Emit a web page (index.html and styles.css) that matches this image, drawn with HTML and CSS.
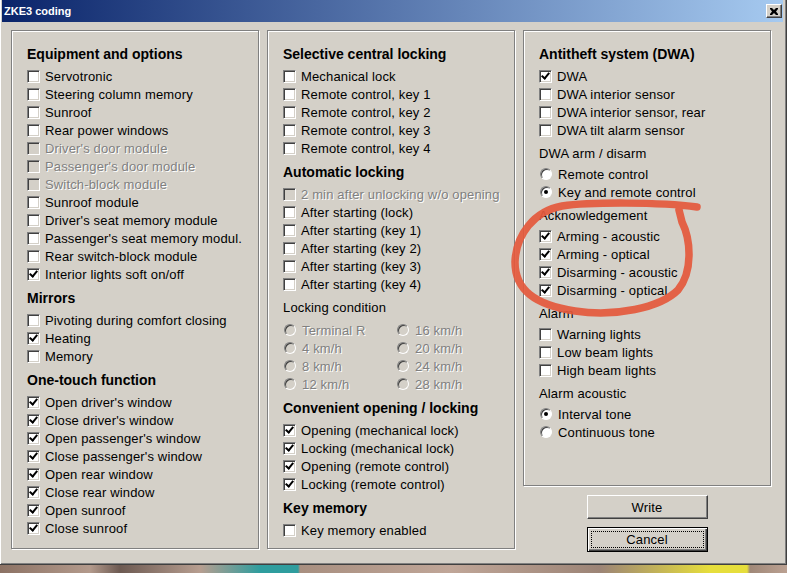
FILE: index.html
```html
<!DOCTYPE html>
<html lang="en">
<head>
  <meta charset="UTF-8" />
  <title>ZKE3 coding</title>
  <link rel="stylesheet" href="styles.css">
</head>
<body>
  <div class="window">
    <div class="titlebar">
      <span class="title">ZKE3 coding</span>
      <span class="close">
        <svg width="8" height="7" viewBox="0 0 8 7"><path d="M0 0h2l2 2 2-2h2v1l-2 2.5 2 2.5v1h-2l-2-2-2 2h-2v-1l2-2.5-2-2.5z" fill="#000"/></svg>
      </span>
    </div>

    <div class="client">
      <!-- Column 1 -->
      <div class="panel tall">
        <div class="heading">Equipment and options</div>
        <div class="row"><span class="cb"></span>Servotronic</div>
        <div class="row"><span class="cb"></span>Steering column memory</div>
        <div class="row"><span class="cb"></span>Sunroof</div>
        <div class="row"><span class="cb"></span>Rear power windows</div>
        <div class="row dis"><span class="cb"></span>Driver's door module</div>
        <div class="row dis"><span class="cb"></span>Passenger's door module</div>
        <div class="row dis"><span class="cb"></span>Switch-block module</div>
        <div class="row"><span class="cb"></span>Sunroof module</div>
        <div class="row"><span class="cb"></span>Driver's seat memory module</div>
        <div class="row"><span class="cb"></span>Passenger's seat memory modul.</div>
        <div class="row"><span class="cb"></span>Rear switch-block module</div>
        <div class="row"><span class="cb on"></span>Interior lights soft on/off</div>

        <div class="heading">Mirrors</div>
        <div class="row"><span class="cb"></span>Pivoting during comfort closing</div>
        <div class="row"><span class="cb on"></span>Heating</div>
        <div class="row"><span class="cb"></span>Memory</div>

        <div class="heading">One-touch function</div>
        <div class="row"><span class="cb on"></span>Open driver's window</div>
        <div class="row"><span class="cb on"></span>Close driver's window</div>
        <div class="row"><span class="cb on"></span>Open passenger's window</div>
        <div class="row"><span class="cb on"></span>Close passenger's window</div>
        <div class="row"><span class="cb on"></span>Open rear window</div>
        <div class="row"><span class="cb on"></span>Close rear window</div>
        <div class="row"><span class="cb on"></span>Open sunroof</div>
        <div class="row"><span class="cb on"></span>Close sunroof</div>
      </div>

      <!-- Column 2 -->
      <div class="panel tall">
        <div class="heading">Selective central locking</div>
        <div class="row"><span class="cb"></span>Mechanical lock</div>
        <div class="row"><span class="cb"></span>Remote control, key 1</div>
        <div class="row"><span class="cb"></span>Remote control, key 2</div>
        <div class="row"><span class="cb"></span>Remote control, key 3</div>
        <div class="row"><span class="cb"></span>Remote control, key 4</div>

        <div class="heading">Automatic locking</div>
        <div class="row dis"><span class="cb"></span>2 min after unlocking w/o opening</div>
        <div class="row"><span class="cb"></span>After starting (lock)</div>
        <div class="row"><span class="cb"></span>After starting (key 1)</div>
        <div class="row"><span class="cb"></span>After starting (key 2)</div>
        <div class="row"><span class="cb"></span>After starting (key 3)</div>
        <div class="row"><span class="cb"></span>After starting (key 4)</div>

        <div class="label">Locking condition</div>
        <div class="grid">
          <div class="row dis"><span class="radio"></span>Terminal R</div>
          <div class="row dis"><span class="radio"></span>16 km/h</div>
          <div class="row dis"><span class="radio"></span>4 km/h</div>
          <div class="row dis"><span class="radio"></span>20 km/h</div>
          <div class="row dis"><span class="radio"></span>8 km/h</div>
          <div class="row dis"><span class="radio"></span>24 km/h</div>
          <div class="row dis"><span class="radio"></span>12 km/h</div>
          <div class="row dis"><span class="radio"></span>28 km/h</div>
        </div>

        <div class="heading">Convenient opening / locking</div>
        <div class="row"><span class="cb on"></span>Opening (mechanical lock)</div>
        <div class="row"><span class="cb on"></span>Locking (mechanical lock)</div>
        <div class="row"><span class="cb on"></span>Opening (remote control)</div>
        <div class="row"><span class="cb on"></span>Locking (remote control)</div>

        <div class="heading">Key memory</div>
        <div class="row"><span class="cb"></span>Key memory enabled</div>
      </div>

      <!-- Column 3 -->
      <div class="side">
        <div class="panel short">
          <div class="heading">Antitheft system (DWA)</div>
          <div class="row"><span class="cb on"></span>DWA</div>
          <div class="row"><span class="cb"></span>DWA interior sensor</div>
          <div class="row"><span class="cb"></span>DWA interior sensor, rear</div>
          <div class="row"><span class="cb"></span>DWA tilt alarm sensor</div>

          <div class="label">DWA arm / disarm</div>
          <div class="row"><span class="radio"></span>Remote control</div>
          <div class="row"><span class="radio on"></span>Key and remote control</div>

          <div class="label">Acknowledgement</div>
          <div class="row"><span class="cb on"></span>Arming - acoustic</div>
          <div class="row"><span class="cb on"></span>Arming - optical</div>
          <div class="row"><span class="cb on"></span>Disarming - acoustic</div>
          <div class="row"><span class="cb on"></span>Disarming - optical</div>

          <div class="label">Alarm</div>
          <div class="row"><span class="cb"></span>Warning lights</div>
          <div class="row"><span class="cb"></span>Low beam lights</div>
          <div class="row"><span class="cb"></span>High beam lights</div>

          <div class="label">Alarm acoustic</div>
          <div class="row"><span class="radio on"></span>Interval tone</div>
          <div class="row"><span class="radio"></span>Continuous tone</div>
        </div>

        <div class="buttons">
          <button class="btn">Write</button>
          <button class="btn default"><span class="focus">Cancel</span></button>
        </div>
      </div>
    </div>

    <!-- hand-drawn marker around the acknowledgement group -->
    <svg class="mark" width="787" height="573" viewBox="0 0 787 573">
      <path d="M697 207 C660 202 590 202 562 206 C534 211 516 235 515 262 C515 290 535 305 575 311 C615 317 660 308 678 290 C693 272 691 240 682 222 L679 210" />
    </svg>
  </div>
</body>
</html>
```

FILE: styles.css
```css
body {
  margin: 0;
  width: 787px;
  height: 573px;
  overflow: hidden;
  background: linear-gradient(to right,
    #8c7264 0, #b39a8c 90px, #6d5a52 120px, #b79e90 200px,
    #2f9d9e 260px, #2f9d9e 298px, #a88f80 300px, #c0a698 450px,
    #9c8476 600px, #e6de3c 710px, #e6de3c 747px, #a08878 750px, #bba192 787px);
  font-family: "Liberation Sans", Arial, sans-serif;
  font-size: 13px;
  letter-spacing: 0.15px;
  color: #000;
}

.window {
  position: relative;
  width: 787px;
  height: 565px;
  box-sizing: border-box;
  padding: 0 3px 3px 2px;
  background-color: #d4d0c8;
  border-right: 1px solid #404040;
  border-bottom: 1px solid #404040;
  box-shadow: inset 1px 0 #fff, inset -1px -1px #808080;
  display: flex;
  flex-direction: column;
}

.titlebar {
  height: 22px;
  display: flex;
  align-items: center;
  justify-content: space-between;
  padding: 0 1px 0 2px;
  background: linear-gradient(to right, #0a246a, #a6caf0);
}

.title {
  color: #fff;
  font-weight: bold;
  font-size: 11px;
  letter-spacing: 0;
}

.close {
  width: 16px;
  height: 14px;
  box-sizing: border-box;
  display: flex;
  align-items: center;
  justify-content: center;
  background-color: #d4d0c8;
  border: 1px solid;
  border-color: #fff #404040 #404040 #fff;
  box-shadow: inset -1px -1px #808080;
}

.client {
  display: flex;
  gap: 8px;
  padding: 8px 0 0 9px;
}

.panel {
  width: 248px;
  box-sizing: border-box;
  padding: 8px 0 0 15px;
  border: 1px solid #808080;
  box-shadow: inset 1px 1px #fff, 1px 1px #fff;
}

.panel.tall {
  height: 519px;
}

.panel.short {
  height: 456px;
}

.side {
  display: flex;
  flex-direction: column;
}

.heading {
  padding: 6px 0 4px;
  line-height: 18px;
  font-size: 14px;
  font-weight: bold;
  letter-spacing: 0;
}

.label {
  padding: 6px 0 2px;
  line-height: 18px;
}

.row {
  height: 18px;
  display: flex;
  align-items: center;
  white-space: nowrap;
}

.row.dis {
  color: #808080;
  text-shadow: 1px 1px #fff;
}

.cb {
  position: relative;
  flex: none;
  width: 13px;
  height: 13px;
  box-sizing: border-box;
  margin-right: 5px;
  background-color: #fff;
  border: 1px solid;
  border-color: #808080 #fff #fff #808080;
  box-shadow: inset 1px 1px #404040, inset -1px -1px #d4d0c8;
}

.dis .cb,
.dis .radio {
  background-color: #d4d0c8;
}

.cb.on::after {
  content: "";
  position: absolute;
  left: 3px;
  top: 0;
  width: 3px;
  height: 6px;
  border: solid #000;
  border-width: 0 2px 2px 0;
  transform: rotate(40deg);
}

.radio {
  position: relative;
  flex: none;
  width: 12px;
  height: 12px;
  box-sizing: border-box;
  margin: 0 6px 0 1px;
  border-radius: 50%;
  background-color: #fff;
  border: 1px solid;
  border-color: #808080 #fff #fff #808080;
  box-shadow: inset 1px 1px #404040;
}

.radio.on::after {
  content: "";
  position: absolute;
  left: 3px;
  top: 3px;
  width: 4px;
  height: 4px;
  border-radius: 50%;
  background-color: #000;
}

.grid {
  display: grid;
  grid-template-columns: 113px auto;
  margin-top: 2px;
}

.buttons {
  display: flex;
  flex-direction: column;
  align-items: center;
  gap: 8px;
  margin-top: 9px;
}

.btn {
  width: 121px;
  height: 24px;
  box-sizing: border-box;
  padding: 0;
  font: inherit;
  letter-spacing: 0.15px;
  color: #000;
  background-color: #d4d0c8;
  border: 1px solid;
  border-color: #fff #404040 #404040 #fff;
  box-shadow: inset -1px -1px #808080;
}

.btn.default {
  height: 25px;
  padding: 3px;
  border-color: #000;
  box-shadow: inset 1px 1px #fff, inset -1px -1px #404040, inset -2px -2px #808080;
}

.focus {
  display: flex;
  align-items: center;
  justify-content: center;
  height: 100%;
  box-sizing: border-box;
  border: 1px dotted #000;
}

.mark {
  position: absolute;
  left: 0;
  top: 0;
  pointer-events: none;
}

.mark path {
  fill: none;
  stroke: #e4583c;
  stroke-opacity: 0.92;
  stroke-width: 7.5;
  stroke-linecap: round;
  stroke-linejoin: round;
}
```
